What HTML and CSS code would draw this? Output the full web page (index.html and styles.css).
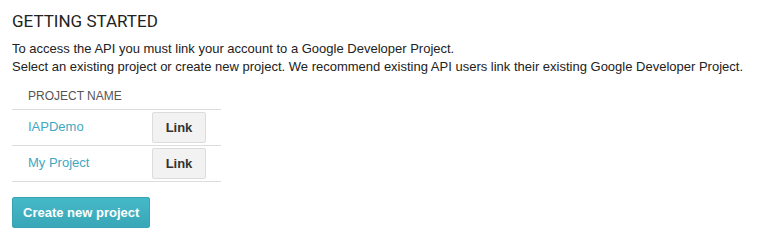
FILE: index.html
```html
<!DOCTYPE html>
<html lang="en">
<head>
  <meta charset="UTF-8" />
  <title>Getting Started</title>
  <link rel="stylesheet" href="styles.css">
</head>
<body>
  <div class="panel">
    <h3>GETTING STARTED</h3>
    <p class="intro">
      To access the API you must link your account to a Google Developer Project.<br>
      Select an existing project or create new project. We recommend existing API users link their existing Google Developer Project.
    </p>

    <table class="projects">
      <thead>
        <tr><th colspan="2">PROJECT NAME</th></tr>
      </thead>
      <tbody>
        <tr>
          <td class="name"><a href="#">IAPDemo</a></td>
          <td class="action"><button class="link-btn">Link</button></td>
        </tr>
        <tr>
          <td class="name"><a href="#">My Project</a></td>
          <td class="action"><button class="link-btn">Link</button></td>
        </tr>
      </tbody>
    </table>

    <button class="create-btn">Create new project</button>
  </div>
</body>
</html>
```

FILE: styles.css
```css
body {
  margin: 0;
  background: #fff;
  font-family: "Liberation Sans", Arial, sans-serif;
  color: #222;
}
.panel {
  padding: 11px 12px;
}
h3 {
  font-family: Roboto, "Liberation Sans", sans-serif;
  font-weight: 400;
  font-size: 17px;
  color: #222;
  margin: 0 0 9px;
  line-height: 20px;
}
.intro {
  font-size: 13px;
  line-height: 18px;
  margin: 0 0 10px;
}
.projects {
  border-collapse: collapse;
  width: 209px;
  font-size: 13px;
}
.projects th {
  text-align: left;
  font-weight: 400;
  font-size: 12px;
  line-height: 15px;
  color: #555;
  padding: 3px 16px 5px;
  border-bottom: 1px solid #ddd;
}
.projects td {
  border-bottom: 1px solid #ddd;
  padding: 2px 0;
}
.projects td.name {
  padding: 0 0 3px 16px;
  vertical-align: middle;
}
.projects a {
  color: #3fa7c3;
  text-decoration: none;
}
.projects td.action {
  width: 69px;
}
.link-btn {
  width: 54px;
  height: 31px;
  background: #f2f2f2;
  border: 1px solid #dcdcdc;
  border-radius: 2px;
  font-family: "Liberation Sans", Arial, sans-serif;
  font-weight: bold;
  font-size: 13px;
  color: #333;
  cursor: pointer;
  display: block;
}
.create-btn {
  display: block;
  margin-top: 15px;
  height: 31px;
  padding: 0 10px;
  background: linear-gradient(to bottom, #46b9c9, #38a7b7);
  border: 1px solid #37a3b3;
  border-radius: 2px;
  color: #fff;
  font-family: "Liberation Sans", Arial, sans-serif;
  font-weight: bold;
  font-size: 13px;
  cursor: pointer;
}
```
